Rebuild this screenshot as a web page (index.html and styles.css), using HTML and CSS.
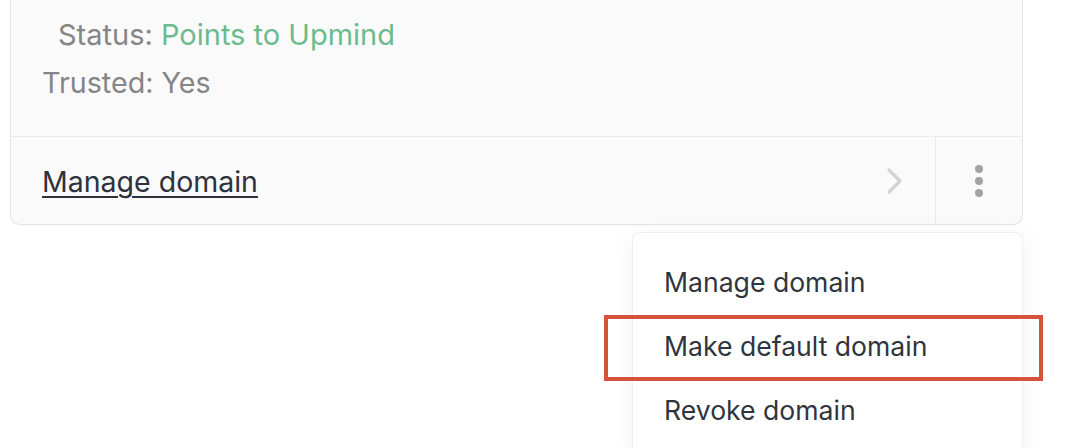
FILE: index.html
```html
<!DOCTYPE html>
<html lang="en">
<head>
<meta charset="utf-8">
<title>Domain</title>
<link rel="stylesheet" href="styles.css">
</head>
<body>
  <div class="card">
    <div class="card-info">
      <div class="line status">Status: <span class="ok">Points to Upmind</span></div>
      <div class="line trusted">Trusted: Yes</div>
    </div>
    <div class="card-row">
      <a class="manage-link" href="#">Manage domain</a>
      <span class="chevron">
        <svg width="20" height="28" viewBox="0 0 20 28"><path d="M4 3 L15 14 L4 25" fill="none" stroke="#d3d3d3" stroke-width="3.2" stroke-linecap="round" stroke-linejoin="round"/></svg>
      </span>
      <span class="more">
        <svg width="10" height="34" viewBox="0 0 10 34"><circle cx="5" cy="5" r="4" fill="#a3a3a3"/><circle cx="5" cy="17" r="4" fill="#a3a3a3"/><circle cx="5" cy="29" r="4" fill="#a3a3a3"/></svg>
      </span>
    </div>
  </div>

  <ul class="menu">
    <li class="menu-item">Manage domain</li>
    <li class="menu-item highlighted">Make default domain</li>
    <li class="menu-item">Revoke domain</li>
  </ul>
</body>
</html>
```

FILE: styles.css
```css
html, body {
  margin: 0;
  padding: 0;
  background: #ffffff;
}

body {
  position: relative;
  width: 1080px;
  height: 448px;
  overflow: hidden;
  font-family: Inter, "Liberation Sans", Arial, sans-serif;
  font-size: 26px;
}

.card {
  margin-left: 10px;
  width: 1013px;
  box-sizing: border-box;
  background: #fafafa;
  border: 1px solid #e5e5e5;
  border-top: none;
  border-radius: 0 0 10px 10px;
  box-shadow: 0 1px 2px rgba(0, 0, 0, 0.03);
}

.card-info {
  height: 137px;
  box-sizing: border-box;
  padding-top: 11px;
  border-bottom: 1px solid #ebebeb;
}

.line {
  font-size: 29px;
  line-height: 48px;
  color: #858585;
  white-space: nowrap;
}

.status {
  padding-left: 47px;
}

.trusted {
  padding-left: 31px;
  font-size: 28.7px;
}

.ok {
  color: #6cbb8d;
}

.card-row {
  display: flex;
  align-items: stretch;
  height: 87px;
}

.manage-link {
  flex: 1;
  display: flex;
  align-items: center;
  padding-left: 31px;
  padding-top: 2px;
  font-size: 28.5px;
  color: #2d323c;
  text-decoration: underline;
  text-decoration-thickness: 2px;
  text-underline-offset: 4px;
}

.chevron {
  display: flex;
  align-items: center;
  padding-right: 30px;
}

.more {
  width: 86px;
  border-left: 1px solid #e8e8e8;
  display: flex;
  align-items: center;
  justify-content: center;
}

.menu {
  position: absolute;
  left: 632px;
  top: 232px;
  width: 391px;
  height: 216px;
  box-sizing: border-box;
  margin: 0;
  padding: 17px 0 0;
  list-style: none;
  background: #ffffff;
  border: 1px solid #efefef;
  border-bottom: none;
  border-radius: 8px 8px 0 0;
  box-shadow: 0 6px 24px rgba(0, 0, 0, 0.06);
}

.menu-item {
  position: relative;
  height: 64px;
  line-height: 64px;
  padding-left: 31px;
  font-size: 26.6px;
  color: #30353d;
}

.highlighted::after {
  content: "";
  position: absolute;
  left: -29px;
  right: -21px;
  top: 1px;
  bottom: -3px;
  border: 4px solid #d6533a;
}
```
